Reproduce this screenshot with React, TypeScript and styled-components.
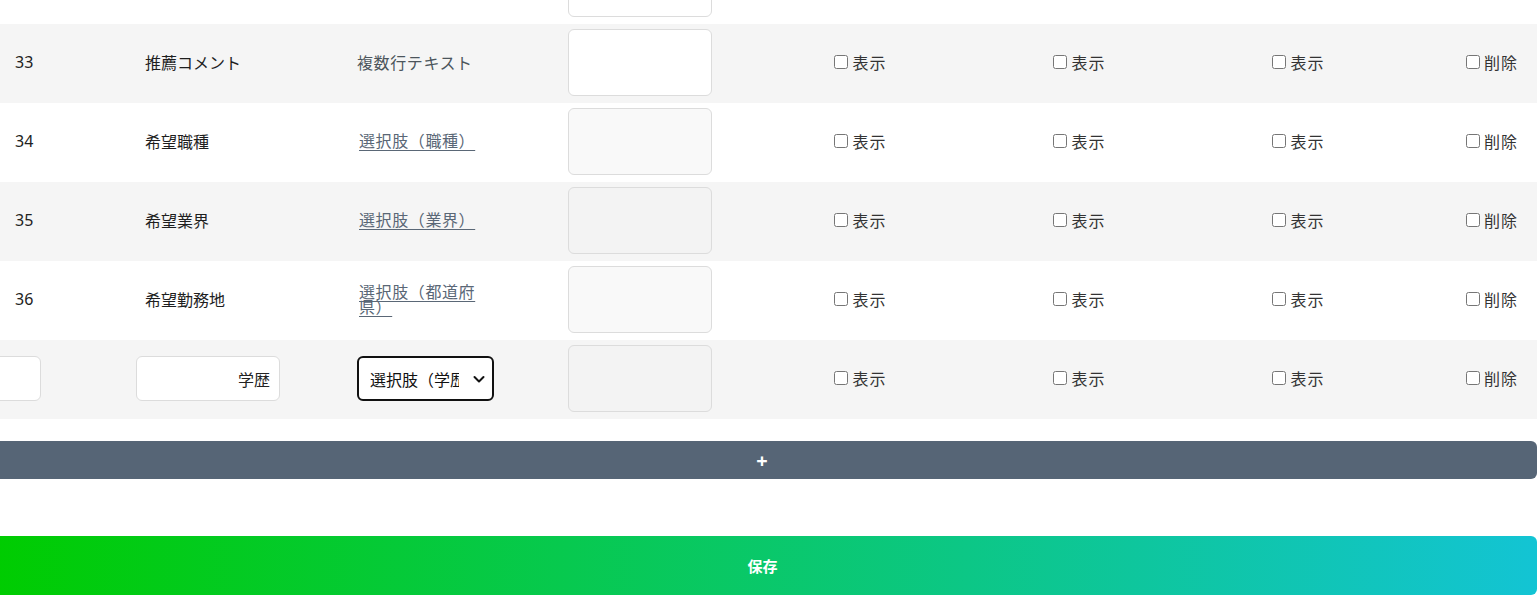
import styled, { createGlobalStyle } from "styled-components";

const GlobalStyle = createGlobalStyle`
  html, body {
    margin: 0;
    padding: 0;
    background: #fff;
    overflow: hidden;
  }
  body {
    font-family: "Noto Sans CJK JP", "Noto Sans", sans-serif;
    color: #222;
  }
`;

interface IField {
  no: number;
  name: string;
  type: string;
  link?: boolean;
  editable?: boolean;
}

const fields: IField[] = [
  { no: 33, name: "推薦コメント", type: "複数行テキスト", editable: true },
  { no: 34, name: "希望職種", type: "選択肢（職種）", link: true },
  { no: 35, name: "希望業界", type: "選択肢（業界）", link: true },
  { no: 36, name: "希望勤務地", type: "選択肢（都道府県）", link: true },
];

const Page = styled.div`
  width: 1545px;
  margin: -55px 0 0 -8px;
  display: flex;
  flex-direction: column;
`;

const Row = styled.div<{ $striped: boolean }>`
  box-sizing: border-box;
  display: grid;
  grid-template-columns: 134px 221px 211px 193px 219px 219px 219px 1fr;
  height: 79px;
  padding-bottom: 2px;
  align-items: center;
  background: ${(p) => (p.$striped ? "#f5f5f5" : "#fff")};
`;

const Cell = styled.div`
  display: flex;
  align-items: center;
  padding: 0 10px 0 8px;
  min-width: 0;
`;

const LeftCell = styled(Cell)`
  padding: 0 10px;
`;

const CenterCell = styled(Cell)`
  justify-content: center;
  padding: 0;
`;

const EndCell = styled(Cell)`
  justify-content: flex-end;
  padding: 0 19px 0 0;
`;

const NumText = styled.span`
  padding: 0 0 2px 15px;
  font-family: "Noto Sans", sans-serif;
  font-size: 16px;
`;

const NameText = styled.span`
  padding: 0 0 2px 9px;
  font-size: 16px;
  color: #1e1e1e;
`;

const TypeText = styled.span`
  padding-bottom: 2px;
  font-size: 16px;
  letter-spacing: 0.6px;
  color: #4c555c;
`;

const TypeLink = styled.a`
  display: block;
  max-width: 124px;
  padding: 0 0 2px 2px;
  font-size: 16px;
  letter-spacing: 0.6px;
  line-height: 15px;
  color: #5a6776;
  text-decoration: underline;
  text-underline-offset: 3px;
  cursor: pointer;
`;

const Memo = styled.textarea<{ $disabled: boolean }>`
  box-sizing: border-box;
  width: 144px;
  height: 67px;
  border: 1px solid #dcdcdc;
  border-radius: 6px;
  resize: none;
  background: ${(p) => (p.$disabled ? "rgba(239, 239, 239, 0.4)" : "#fff")};
`;

const TextBox = styled.input<{ $width: number }>`
  box-sizing: border-box;
  width: ${(p) => p.$width}px;
  height: 45px;
  border: 1px solid #dcdcdc;
  border-radius: 6px;
  background: #fff;
  padding: 0 9px;
  font-family: inherit;
  font-size: 16px;
  text-align: right;
  color: #222;
`;

const NumBox = styled(TextBox)`
  margin-left: -8px;
`;

const SelectWrap = styled.div`
  position: relative;
  display: inline-flex;
  svg {
    position: absolute;
    right: 8px;
    top: 50%;
    transform: translateY(-50%);
    pointer-events: none;
  }
`;

const TypeSelect = styled.select`
  box-sizing: border-box;
  appearance: none;
  width: 137px;
  height: 45px;
  border: 2px solid #111;
  border-radius: 6px;
  background: #fff;
  padding: 0 33px 0 11px;
  font-family: inherit;
  font-size: 16px;
  color: #111;
`;

const Check = styled.label`
  display: inline-flex;
  align-items: center;
  gap: 4px;
  padding-bottom: 2px;
  font-size: 16px;
  line-height: 1;
  letter-spacing: 1px;
  color: #333;
  input {
    width: 14px;
    height: 14px;
    margin: 0;
  }
`;

const AddButton = styled.button`
  margin-top: 22px;
  height: 38px;
  border: none;
  border-radius: 6px;
  background: #566576;
  color: #fff;
  font-size: 20px;
  font-weight: 700;
  font-family: "Noto Sans", sans-serif;
  cursor: pointer;
  padding: 0 5px 0 0;
`;

const SaveButton = styled.button`
  margin-top: 57px;
  height: 59px;
  border: none;
  border-radius: 6px;
  background: linear-gradient(to right, #00cc00, #13c4d4);
  color: #fff;
  font-size: 15px;
  font-weight: 700;
  font-family: inherit;
  cursor: pointer;
  padding: 0 4px 0 0;
`;

const Flags = () => (
  <>
    {[0, 1, 2].map((i) => (
      <CenterCell key={i}>
        <Check>
          <input type="checkbox" />
          表示
        </Check>
      </CenterCell>
    ))}
    <EndCell>
      <Check>
        <input type="checkbox" />
        削除
      </Check>
    </EndCell>
  </>
);

export default function App() {
  return (
    <>
      <GlobalStyle />
      <Page>
        {/* tail of the row above, scrolled mostly out of view */}
        <Row $striped={false}>
          <Cell />
          <LeftCell />
          <LeftCell />
          <LeftCell>
            <Memo $disabled={false} />
          </LeftCell>
        </Row>
        {fields.map((f, i) => (
          <Row key={f.no} $striped={i % 2 === 0}>
            <Cell>
              <NumText>{f.no}</NumText>
            </Cell>
            <LeftCell>
              <NameText>{f.name}</NameText>
            </LeftCell>
            <LeftCell>
              {f.link ? <TypeLink>{f.type}</TypeLink> : <TypeText>{f.type}</TypeText>}
            </LeftCell>
            <LeftCell>
              <Memo $disabled={!f.editable} disabled={!f.editable} />
            </LeftCell>
            <Flags />
          </Row>
        ))}
        <Row $striped>
          <Cell>
            <NumBox $width={49} />
          </Cell>
          <LeftCell>
            <TextBox $width={144} defaultValue="学歴" />
          </LeftCell>
          <LeftCell>
            <SelectWrap>
              <TypeSelect defaultValue="edu">
                <option value="edu">選択肢（学歴）</option>
                <option value="job">選択肢（職種）</option>
              </TypeSelect>
              <svg width="14" height="14" viewBox="0 0 14 14" fill="none">
                <path d="M2.5 5l4.5 4.5L11.5 5" stroke="#111" strokeWidth="2" strokeLinecap="round" strokeLinejoin="round" />
              </svg>
            </SelectWrap>
          </LeftCell>
          <LeftCell>
            <Memo $disabled disabled />
          </LeftCell>
          <Flags />
        </Row>
        <AddButton>+</AddButton>
        <SaveButton>保存</SaveButton>
      </Page>
    </>
  );
}
